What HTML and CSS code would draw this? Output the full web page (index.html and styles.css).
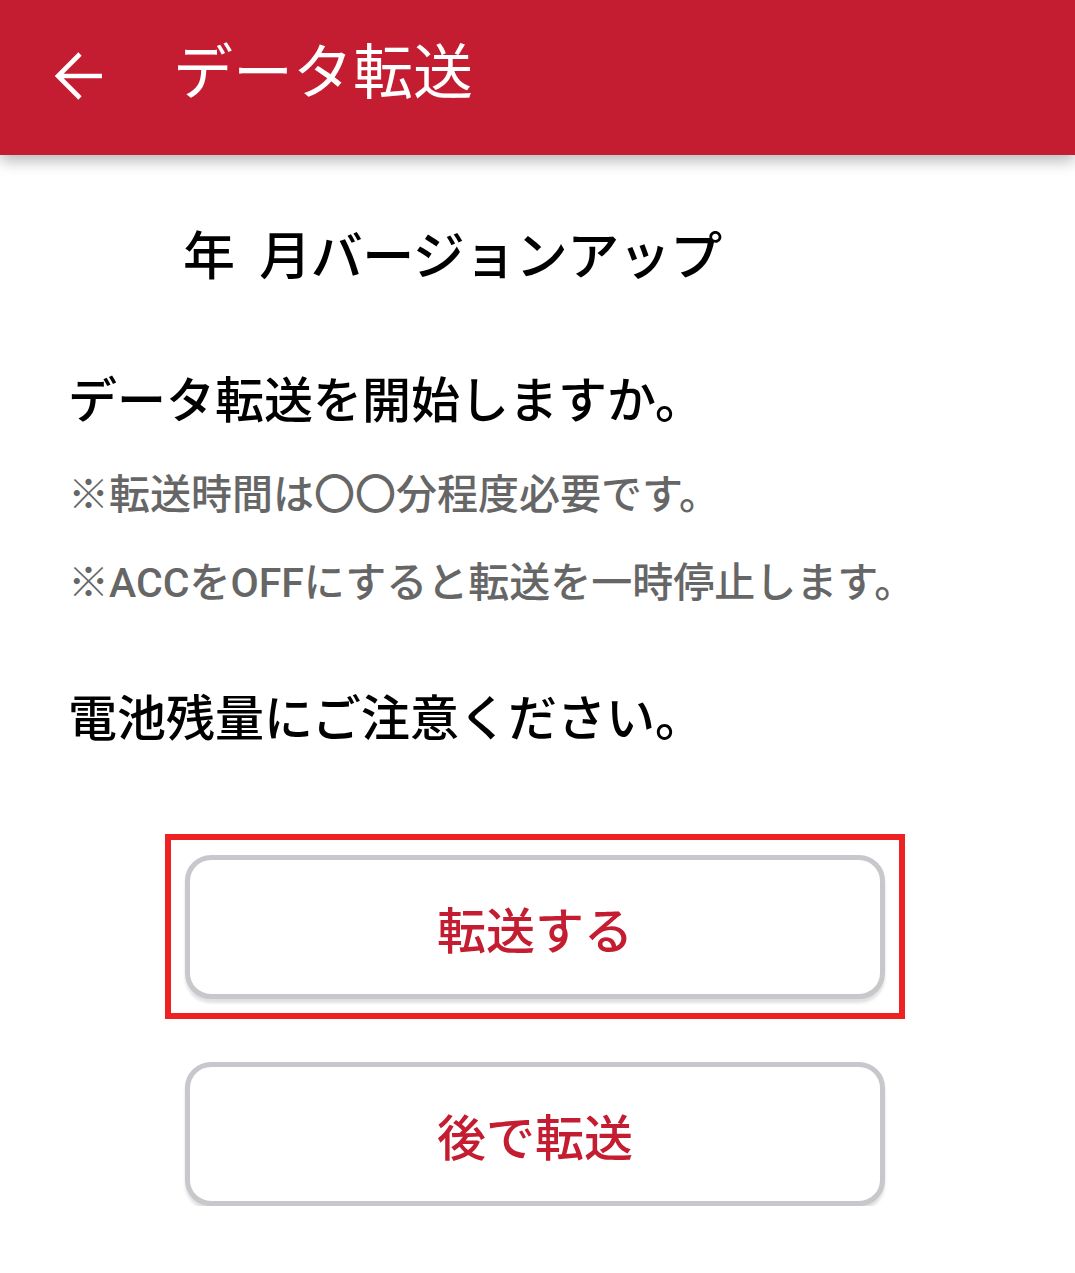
FILE: index.html
```html
<!DOCTYPE html>
<html lang="ja">
<head>
<meta charset="utf-8">
<link rel="stylesheet" href="styles.css">
</head>
<body>
<header class="appbar">
  <svg class="back" width="50" height="52" viewBox="0 0 50 52"><path d="M3 24H48M26 2L4 24L26 46" fill="none" stroke="#fff" stroke-width="4.6"/></svg>
  <h1 class="title">データ転送</h1>
</header>
<main class="content">
  <p class="version">年&nbsp;&nbsp;月バージョンアップ</p>
  <p class="question">データ転送を開始しますか。</p>
  <p class="note">※転送時間は〇〇分程度必要です。</p>
  <p class="note note2">※ACCをOFFにすると転送を一時停止します。</p>
  <p class="question battery">電池残量にご注意ください。</p>
  <div class="actions">
    <div class="highlight">
      <button class="btn">転送する</button>
    </div>
    <button class="btn btn-later">後で転送</button>
  </div>
</main>
</body>
</html>
```
FILE: styles.css
```css
html, body {
  margin: 0;
  padding: 0;
  background: #fff;
  font-family: Roboto, "Noto Sans CJK JP", sans-serif;
}
.appbar {
  height: 155px;
  background: #c41c30;
  display: flex;
  align-items: center;
  padding-left: 54px;
  box-shadow: 0 6px 14px rgba(0,0,0,0.28);
  position: relative;
}
.back {
  display: block;
  margin-top: 0;
}
.title {
  margin: -8px 0 0 69px;
  color: #fff;
  font-weight: 400;
  font-size: 60px;
  line-height: 1;
}
.content {
  padding: 0 0 0 68px;
}
p { margin: 0; line-height: 1; }
.version {
  font-size: 52px;
  font-weight: 500;
  color: #000;
  padding-left: 115px;
  margin-top: 77px;
  letter-spacing: -0.5px;
}
.question {
  font-size: 49px;
  font-weight: 500;
  color: #000;
  margin-top: 93px;
}
.note {
  font-size: 41px;
  font-weight: 500;
  color: #666;
  margin-top: 49px;
}
.note2 { margin-top: 47px; }
.battery { margin-top: 91px; }
.actions {
  display: flex;
  flex-direction: column;
  margin-top: 90px;
  margin-left: 97px;
  width: 740px;
}
.highlight {
  border: 6px solid #ee2222;
  padding: 15px 14px 14px 14px;
}
.btn {
  display: block;
  width: 700px;
  height: 144px;
  border: 5px solid #c8c8cc;
  border-radius: 26px;
  background: #fff;
  color: #c41c30;
  font-family: Roboto, "Noto Sans CJK JP", sans-serif;
  font-size: 49px;
  font-weight: 500;
  box-shadow: 0 4px 3px rgba(0,0,0,0.12);
  padding: 0;
}
.btn-later {
  margin-top: 43px;
  margin-left: 20px;
}
```
